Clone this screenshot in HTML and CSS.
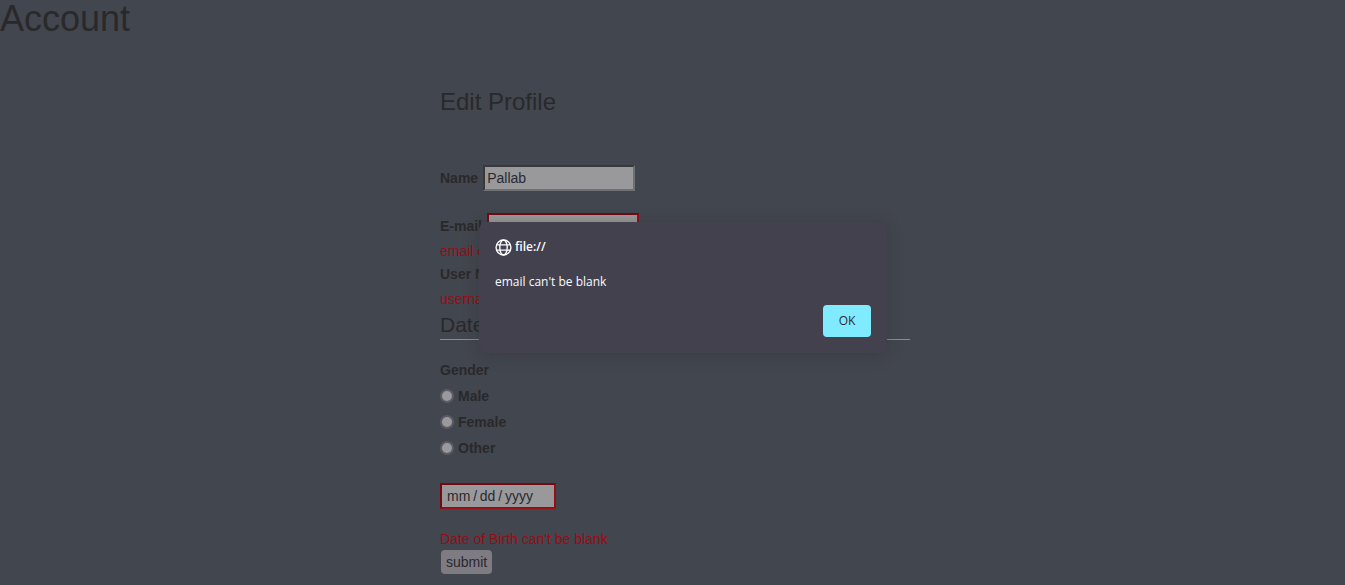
FILE: index.html
```html
<!DOCTYPE html>
<html lang="en">
<head>
<meta charset="utf-8">
<title>Account</title>
<link rel="stylesheet" href="styles.css">
</head>
<body>
<h1 class="page-title">Account</h1>
<form class="profile" novalidate>
  <h2 class="profile-title">Edit Profile</h2>
  <div class="row row-name">
    <label for="name">Name</label>
    <input class="field" id="name" type="text" value="Pallab">
  </div>
  <div class="row">
    <label for="email">E-mail</label>
    <input class="field invalid" id="email" type="email">
  </div>
  <p class="error">email can't be blank</p>
  <div class="row">
    <label for="username">User Name</label>
    <input class="field invalid" id="username" type="text">
  </div>
  <p class="error">username can't be blank</p>
  <h3 class="section-title">Date of Birth</h3>
  <div class="gender" role="radiogroup" aria-labelledby="gender-label">
    <span class="gender-label" id="gender-label">Gender</span>
    <label class="option"><input class="radio" type="radio" name="gender">Male</label>
    <label class="option"><input class="radio" type="radio" name="gender">Female</label>
    <label class="option"><input class="radio" type="radio" name="gender">Other</label>
  </div>
  <input class="field date invalid" type="text" placeholder="mm&thinsp;/&thinsp;dd&thinsp;/&thinsp;yyyy" aria-label="Date of Birth">
  <p class="error error-date">Date of Birth can't be blank</p>
  <button class="submit" type="submit">submit</button>
</form>
<div class="alert" role="alertdialog" aria-labelledby="alert-origin" aria-describedby="alert-message">
  <div class="alert-head">
    <svg class="globe" viewBox="0 0 16 16" fill="none" stroke="currentColor" stroke-width="1.3" aria-hidden="true">
      <circle cx="8" cy="8" r="7"/>
      <ellipse cx="8" cy="8" rx="3.5" ry="7"/>
      <path d="M1.6 5.5h12.8M1.6 10.5h12.8"/>
    </svg>
    <span id="alert-origin">file://</span>
  </div>
  <p class="alert-message" id="alert-message">email can't be blank</p>
  <button class="alert-ok" type="button">OK</button>
</div>
</body>
</html>
```
FILE: styles.css
```css
* { box-sizing: border-box; }

body {
  margin: 0;
  background: #42464e;
  color: #29292b;
  font: 14px/20px "Liberation Sans", Arial, sans-serif;
}

h1, h2, h3, p { margin: 0; font-weight: 400; }

.page-title { font-size: 36px; line-height: 38px; }

.profile {
  display: flex;
  flex-direction: column;
  align-items: flex-start;
  max-width: 910px;
  padding-left: 440px;
  padding-top: 50px;
}

.profile-title { font-size: 24px; line-height: 28px; margin-bottom: 49px; }

.row { display: flex; align-items: center; gap: 5px; }
.row-name { margin-bottom: 22px; }

label, .gender-label { font-weight: 700; }

.field {
  width: 152px;
  height: 26px;
  padding: 1px 2px;
  border: 2px solid;
  border-color: #38393b #6f7073 #6f7073 #38393b;
  border-radius: 0;
  background: #99999b;
  color: #29292f;
  font: inherit;
}

.invalid { border-color: #730911 #980c14 #980c14 #730911; }

.error { color: #980c14; margin-top: 2px; }

.section-title {
  align-self: stretch;
  font-size: 21px;
  line-height: 28px;
  padding-top: 2px;
  border-bottom: 1px solid #8b8c90;
  margin-bottom: 20px;
}

.gender { display: flex; flex-direction: column; gap: 6px; margin-bottom: 25px; }
.option { display: flex; align-items: center; gap: 4px; }

.radio {
  appearance: none;
  width: 14px;
  height: 14px;
  margin: 0;
  border: 2px solid #5c5a66;
  border-radius: 50%;
  background: #9a9a9d;
}

.date { width: 116px; padding: 1px 5px; }
.date::placeholder { color: #29292f; opacity: 1; }
.error-date { margin-top: 20px; }

.submit {
  height: 24px;
  margin: 1px;
  padding: 0 5px;
  border: 0;
  border-radius: 4px;
  background: #7e7b83;
  color: #29292f;
  font: inherit;
}

.alert {
  position: absolute;
  top: 222px;
  left: 479px;
  width: 408px;
  display: flex;
  flex-direction: column;
  padding: 16px;
  border-radius: 8px;
  background: #44414e;
  box-shadow: 0 2px 16px rgba(40, 38, 48, 0.3);
  color: #fbfbfe;
  font: 12px/18px "Open Sans", "Noto Sans", sans-serif;
}

.alert-head { display: flex; align-items: center; gap: 3px; font-weight: 600; }
.globe { width: 17px; height: 17px; }
.alert-message { margin: 17px 0 14px; }

.alert-ok {
  align-self: flex-end;
  width: 48px;
  height: 32px;
  padding: 0;
  border: 0;
  border-radius: 4px;
  background: #80ebff;
  color: #2b2a33;
  font: inherit;
}
```
